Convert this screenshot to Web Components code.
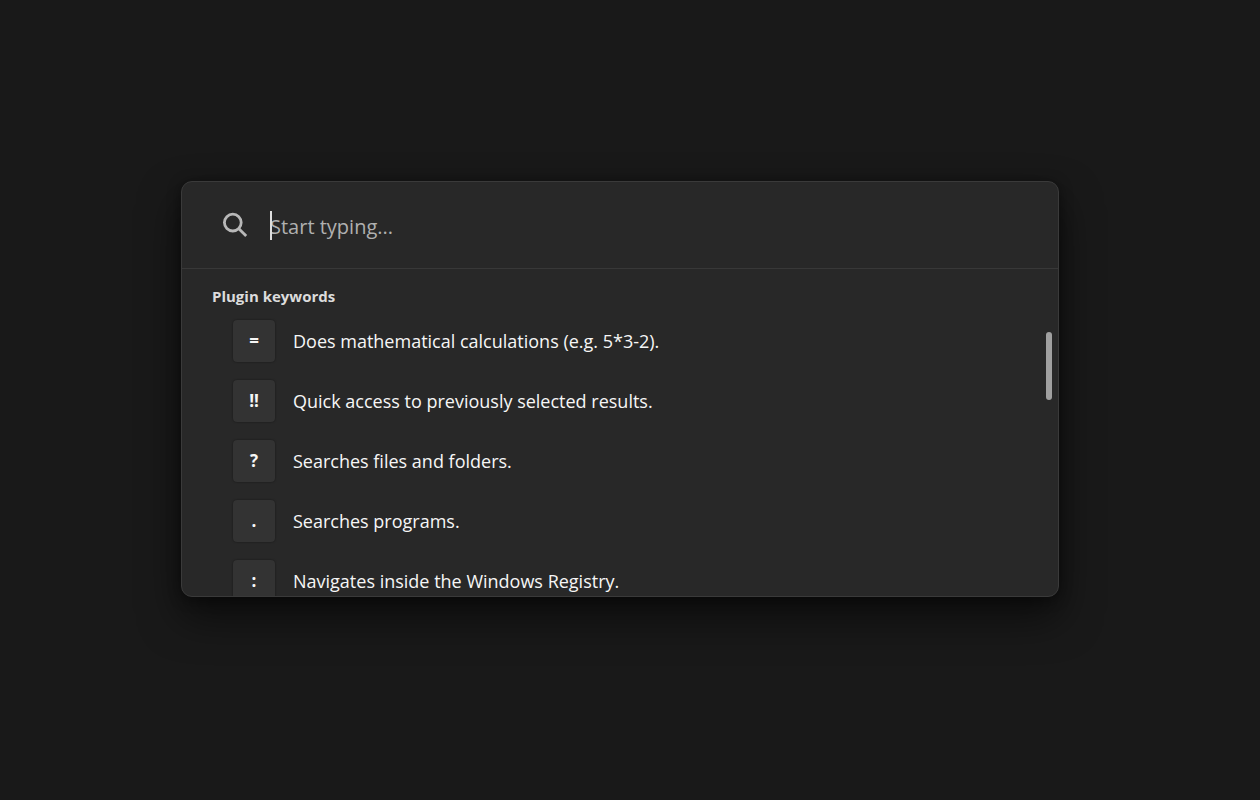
<!DOCTYPE html>
<html lang="en">
<head>
<meta charset="utf-8">
<title>Launcher</title>
<style>
  body {
    margin: 0;
    min-height: 100vh;
    box-sizing: border-box;
    padding: 181px 201px 40px 181px;
    background: #191919;
    color: #f6f6f6;
    font-family: "Open Sans", "Noto Sans", sans-serif;
  }
</style>
</head>
<body>

<launcher-window>
  <launcher-search slot="search" placeholder="Start typing..."></launcher-search>
  <launcher-results heading="Plugin keywords">
    <plugin-keyword key="=">Does mathematical calculations (e.g. 5*3-2).</plugin-keyword>
    <plugin-keyword key="!!">Quick access to previously selected results.</plugin-keyword>
    <plugin-keyword key="?">Searches files and folders.</plugin-keyword>
    <plugin-keyword key=".">Searches programs.</plugin-keyword>
    <plugin-keyword key=":">Navigates inside the Windows Registry.</plugin-keyword>
  </launcher-results>
</launcher-window>

<script>
(function () {

  // ====== WINDOW ======
  class LauncherWindow extends HTMLElement {

    constructor() {
      super();
      this.attachShadow({ mode: "open" }).innerHTML = `
        <style>
          :host {
            display: block;
            overflow: hidden;
            background: #282828;
            border: 1px solid #3a3a3a;
            border-radius: 11px;
            box-shadow: 0 20px 40px rgba(0, 0, 0, 0.55), 0 2px 14px rgba(0, 0, 0, 0.4);
          }

          header {
            border-bottom: 1px solid #383838;
          }
        </style>

        <header><slot name="search"></slot></header>
        <main><slot></slot></main>
      `;
    }
  }

  // ====== SEARCH ======
  class LauncherSearch extends HTMLElement {

    constructor() {
      super();
      this.attachShadow({ mode: "open" });
    }

    connectedCallback() {
      this.render();
      this.addTyping();
    }

    render() {
      const placeholder = this.getAttribute("placeholder") || "";

      this.shadowRoot.innerHTML = `
        <style>
          :host {
            display: flex;
            align-items: center;
            gap: 22px;
            height: 86px;
            padding: 0 40px;
          }

          svg {
            display: block;
            width: 26px;
            height: 26px;
          }

          .field {
            position: relative;
            flex: 1;
            padding-top: 4px;
          }

          input {
            display: block;
            width: 100%;
            height: 30px;
            padding: 0;
            border: 0;
            outline: 0;
            background: none;
            color: #f2f2f2;
            font: 400 20px/30px "Open Sans", "Noto Sans", sans-serif;
          }

          input::placeholder {
            color: #b0b0b0;
            opacity: 1;
          }

          .caret {
            position: absolute;
            left: 0;
            top: 3px;
            width: 2px;
            height: 29px;
            background: #dedede;
          }

          .field:focus-within .caret,
          .caret.hidden {
            display: none;
          }
        </style>

        <label for="query">
          <svg viewBox="0 0 26 26" fill="none" stroke="#b8b8b8" stroke-width="2.8" role="img" aria-label="Search">
            <circle cx="10.8" cy="10.6" r="8.4"/>
            <path d="M16.6 16.4 24.2 24"/>
          </svg>
        </label>
        <div class="field">
          <input type="text" id="query" placeholder="${placeholder}" autocomplete="off" spellcheck="false">
          <span class="caret"></span>
        </div>
      `;
    }

    addTyping() {
      const input = this.shadowRoot.getElementById("query");
      const caret = this.shadowRoot.querySelector(".caret");
      input.addEventListener("input", () => {
        caret.classList.toggle("hidden", input.value !== "");
      });
    }
  }

  // ====== RESULTS ======
  class LauncherResults extends HTMLElement {

    constructor() {
      super();
      this.attachShadow({ mode: "open" });
    }

    connectedCallback() {
      this.shadowRoot.innerHTML = `
        <style>
          :host {
            display: block;
            position: relative;
          }

          .scroller {
            max-height: 327px;
            overflow-y: auto;
            scrollbar-width: none;
          }

          h2 {
            margin: 0;
            padding: 16px 30px 0;
            color: #dcdcdc;
            font-size: 15px;
            line-height: 22px;
            font-weight: 700;
          }

          .list {
            display: grid;
            gap: 18px;
            padding: 13px 51px 18px;
          }

          /* thumb lies over the list, the native bar is hidden */
          .thumb {
            position: absolute;
            right: 6px;
            top: 63px;
            width: 6px;
            height: 68px;
            border-radius: 3px;
            background: #a0a0a0;
          }
        </style>

        <div class="scroller">
          <h2>${this.getAttribute("heading")}</h2>
          <div class="list" role="list"><slot></slot></div>
        </div>
        <div class="thumb"></div>
      `;
    }
  }

  // ====== ONE KEYWORD ROW ======
  class PluginKeyword extends HTMLElement {

    constructor() {
      super();
      this.attachShadow({ mode: "open" });
    }

    connectedCallback() {
      this.setAttribute("role", "listitem");
      this.shadowRoot.innerHTML = `
        <style>
          :host {
            display: block;
          }

          button {
            display: flex;
            align-items: center;
            gap: 18px;
            width: 100%;
            padding: 0;
            border: 0;
            background: none;
            color: inherit;
            font: 400 18px/24px "Open Sans", "Noto Sans", sans-serif;
            text-align: left;
          }

          .key {
            display: flex;
            align-items: center;
            justify-content: center;
            box-sizing: border-box;
            width: 42px;
            height: 42px;
            border-radius: 4px;
            background: #333333;
            box-shadow: 0 0 2px rgba(0, 0, 0, 0.5);
            font-size: 17px;
            font-weight: 700;
          }
        </style>

        <button type="button">
          <span class="key">${this.getAttribute("key")}</span>
          <span><slot></slot></span>
        </button>
      `;
    }
  }

  customElements.define("launcher-window", LauncherWindow);
  customElements.define("launcher-search", LauncherSearch);
  customElements.define("launcher-results", LauncherResults);
  customElements.define("plugin-keyword", PluginKeyword);

})();
</script>
</body>
</html>
